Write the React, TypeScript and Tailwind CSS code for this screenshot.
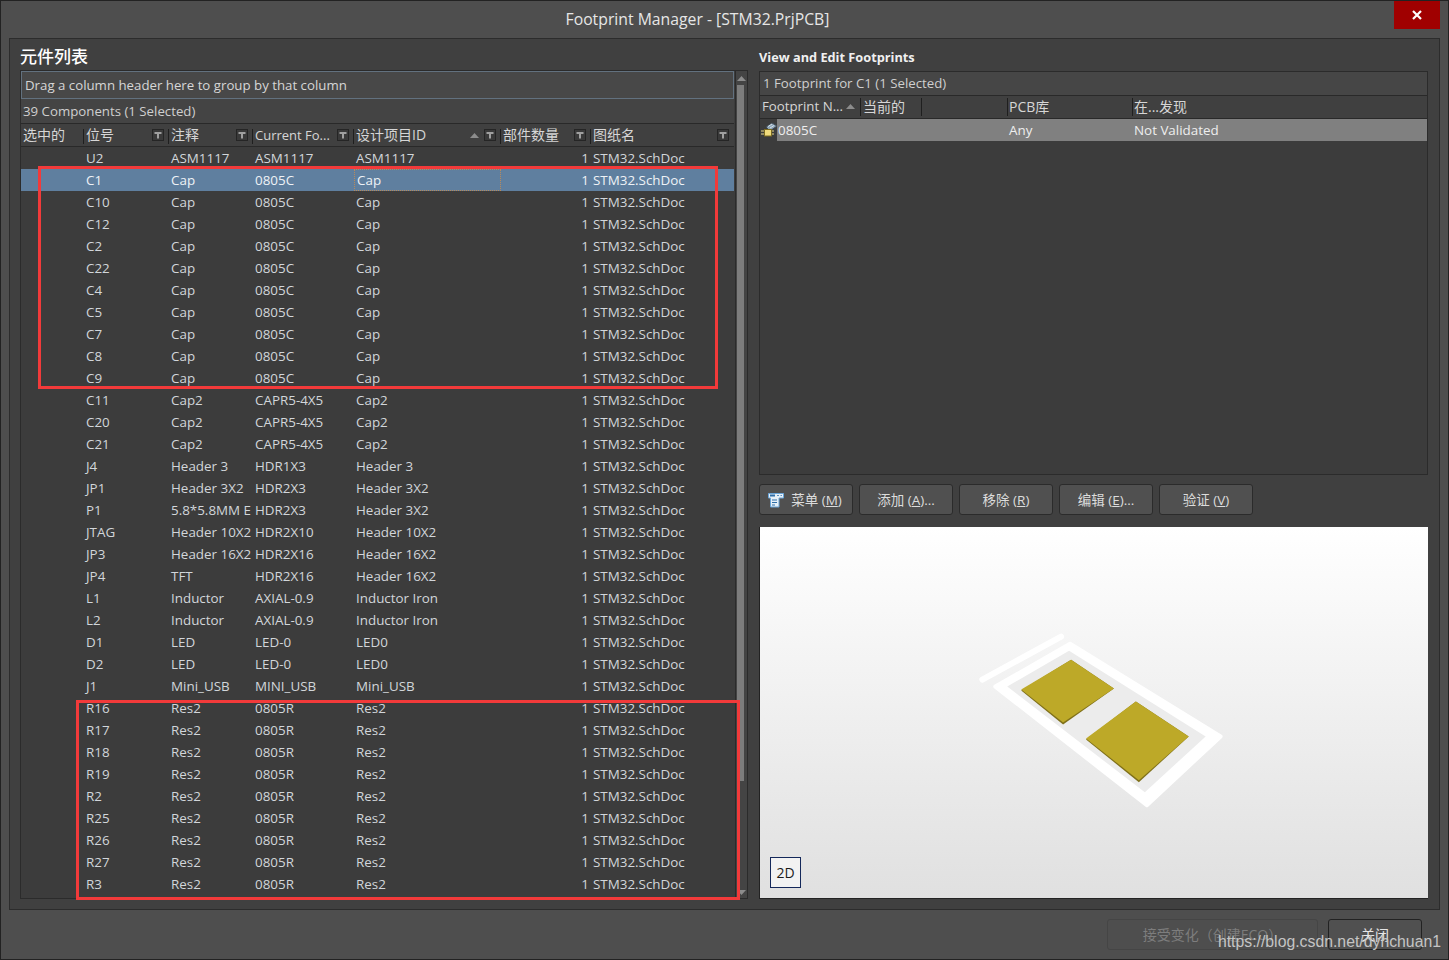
const font = { fontFamily: '"Open Sans", "Noto Sans CJK SC", sans-serif' };

const groups: [string, string, string, string[]][] = [
  ['ASM1117', 'ASM1117', 'ASM1117', ['U2']],
  ['Cap', '0805C', 'Cap', ['C1', 'C10', 'C12', 'C2', 'C22', 'C4', 'C5', 'C7', 'C8', 'C9']],
  ['Cap2', 'CAPR5-4X5', 'Cap2', ['C11', 'C20', 'C21']],
  ['Header 3', 'HDR1X3', 'Header 3', ['J4']],
  ['Header 3X2', 'HDR2X3', 'Header 3X2', ['JP1']],
  ['5.8*5.8MM E', 'HDR2X3', 'Header 3X2', ['P1']],
  ['Header 10X2', 'HDR2X10', 'Header 10X2', ['JTAG']],
  ['Header 16X2', 'HDR2X16', 'Header 16X2', ['JP3']],
  ['TFT', 'HDR2X16', 'Header 16X2', ['JP4']],
  ['Inductor', 'AXIAL-0.9', 'Inductor Iron', ['L1', 'L2']],
  ['LED', 'LED-0', 'LED0', ['D1', 'D2']],
  ['Mini_USB', 'MINI_USB', 'Mini_USB', ['J1']],
  ['Res2', '0805R', 'Res2', ['R16', 'R17', 'R18', 'R19', 'R2', 'R25', 'R26', 'R27', 'R3']],
];

const rows = groups.flatMap(([comment, footprint, id, names]) =>
  names.map((name) => ({ name, comment, footprint, id }))
);

const COLS = 'grid grid-cols-[63px_85px_84px_101px_147px_90px_143px]';

function FilterIcon() {
  return (
    <span className="absolute right-[5px] top-[5px] flex h-[12px] w-[12px] items-center justify-center border border-[#252525] bg-[#3a3a3a]">
      <svg width="8" height="8" viewBox="0 0 8 8">
        <path d="M0.5 1h7v2H5v4.5H3V3H0.5z" fill="#a0a0a0" />
      </svg>
    </span>
  );
}

function SortUp({ className }: { className: string }) {
  return (
    <svg className={className} width="9" height="5" viewBox="0 0 9 5">
      <path d="M4.5 0L9 5H0z" fill="#8c8c8c" />
    </svg>
  );
}

function HeaderCell({ label, filter = true, last = false, small = false, children }: { label: string; filter?: boolean; last?: boolean; small?: boolean; children?: React.ReactNode }) {
  return (
    <div className={`relative flex h-full items-center overflow-hidden whitespace-nowrap pl-[2px] ${small ? 'pt-[1px] text-[13px]' : 'pb-[1px] text-[14px]'}`}>
      {!last && <span className="absolute right-0 top-[5px] h-[15px] w-px bg-[#1f1f1f]" />}
      {label}
      {children}
      {filter && <FilterIcon />}
    </div>
  );
}

function ComponentRow({ row, index }: { row: (typeof rows)[number]; index: number }) {
  const selected = index === 1;
  return (
    <div className={`${COLS} h-[22px] items-center text-[13.4px] leading-[22px] ${selected ? 'bg-[#5f7f9f] text-[#eef2f6]' : 'text-[#d2d6da]'}`}>
      <div />
      <div className="pl-[2px]">{row.name}</div>
      <div className="overflow-hidden whitespace-nowrap pl-[2px]">{row.comment}</div>
      <div className="overflow-hidden whitespace-nowrap pl-[2px]">{row.footprint}</div>
      <div className={`h-[22px] pl-[2px] ${selected ? 'border border-dotted border-[#b98a5a] pl-[1px] leading-[20px]' : ''}`}>{row.id}</div>
      <div className="pr-[2px] text-right">1</div>
      <div className="pl-[2px]">STM32.SchDoc</div>
    </div>
  );
}

function ActionButton({ children }: { children: React.ReactNode }) {
  return (
    <button className="flex h-[31px] w-[94px] items-center justify-center rounded-[3px] border border-[#2b2b2b] bg-[#505050] pt-[1px] text-[13.5px] text-[#dcdcdc]">
      {children}
    </button>
  );
}

function MenuIcon() {
  return (
    <svg className="mr-[5px] -translate-x-[2px]" width="16" height="16" viewBox="0 0 16 16">
      <path d="M0.5 1.5h15v4.5H11v9H2.5V6H0.5z" fill="#e6f0f8" stroke="#6aa5d8" />
      <path d="M2 3.5h5" stroke="#2f6ea8" strokeWidth="2" />
      <path d="M9 3.5h2M12.5 3.5h1.5" stroke="#5d8fbd" />
      <path d="M4 8h5M4 10.5h5M4 13h3" stroke="#2f6ea8" />
    </svg>
  );
}

function FootprintIcon() {
  return (
    <svg className="absolute left-[1px] top-[3px]" width="17" height="16" viewBox="0 0 17 16">
      <path d="M5 5l6-4 5 3-7 5z" fill="#8fa6b8" stroke="#3f4a55" />
      <path d="M7 4.5l4-2.5M9 6l4-2.5" stroke="#d5e0ea" />
      <rect x="3.5" y="7.5" width="7" height="6.5" fill="#f1dc7c" stroke="#7a6a20" />
      <path d="M0 9h3M0 12h3M11 9h2M11 12h2" stroke="#e8d98a" />
    </svg>
  );
}

export default function App() {
  return (
    <div className="flex h-[960px] w-[1449px] flex-col overflow-hidden border border-[#222222] bg-[#4e4e4e] text-[13px] text-[#d2d6da]" style={font}>
      {/* Title bar */}
      <div className="relative flex h-[37px] shrink-0 items-center justify-center pr-[54px] text-[15.75px] text-[#e6e6e6]">
        Footprint Manager - [STM32.PrjPCB]
        <div className="absolute right-[8px] top-0 flex h-[28px] w-[46px] items-center justify-center bg-[#a00000]">
          <svg width="12" height="12" viewBox="0 0 12 12">
            <path d="M2 2l8 8M10 2l-8 8" stroke="#ffffff" strokeWidth="2.2" />
          </svg>
        </div>
      </div>

      {/* Main panel */}
      <div className="mx-[8px] flex h-[872px] shrink-0 gap-[11px] border border-[#2c2c2c] bg-[#404040] pl-[10px] pr-[11px]">
        {/* Left: component list */}
        <div className="relative w-[728px] shrink-0">
          <div className="h-[31px] pt-[6px] text-[17px] font-medium leading-[23px] text-white">元件列表</div>
          <div className="flex h-[829px] border border-[#2b2b2b] bg-[#3c3c3c]">
            <div className="w-[713px] shrink-0">
              <div className="flex h-[28px] items-center border border-[#62717f] bg-[#484848] pl-[3px] pt-[1px] text-[13.25px] text-[#d6d6d6]">
                Drag a column header here to group by that column
              </div>
              <div className="flex h-[24px] items-center bg-[#444444] pl-[2px] pt-[1px] text-[13.25px] text-[#cfcfcf]">39 Components (1 Selected)</div>
              <div className={`${COLS} h-[24px] border-y border-[#292929] bg-[#404040] text-[#d6d6d6]`}>
                <HeaderCell label="选中的" filter={false} />
                <HeaderCell label="位号" />
                <HeaderCell label="注释" />
                <HeaderCell label="Current Fo..." small />
                <HeaderCell label="设计项目ID">
                  <SortUp className="absolute right-[22px] top-[9px]" />
                </HeaderCell>
                <HeaderCell label="部件数量" />
                <HeaderCell label="图纸名" last />
              </div>
              {rows.map((row, index) => (
                <ComponentRow key={row.name} row={row} index={index} />
              ))}
            </div>
            {/* Scrollbar */}
            <div className="relative ml-[1px] w-[12px] shrink-0 border-l border-[#2b2b2b] bg-[#444444]">
              <SortUp className="absolute left-[1px] top-[5px]" />
              <div className="absolute left-[1px] top-[14px] h-[696px] w-[7px] bg-[#7d7d7d]" />
              <svg className="absolute bottom-[3px] left-[1px]" width="9" height="5" viewBox="0 0 9 5">
                <path d="M4.5 5L9 0H0z" fill="#8c8c8c" />
              </svg>
            </div>
          </div>
          {/* Annotation frames */}
          <div className="absolute left-[18px] top-[127px] h-[223px] w-[680px] border-[3px] border-[#f23a3a]" />
          <div className="absolute left-[56px] top-[661px] h-[200px] w-[664px] border-[3px] border-[#f23a3a]" />
        </div>

        {/* Right: footprints */}
        <div className="flex min-w-0 flex-1 flex-col">
          <div className="h-[32px] pt-[10px] text-[12.75px] font-bold leading-[17px] text-[#f0f0f0]">View and Edit Footprints</div>
          <div className="h-[404px] border border-[#2b2b2b] bg-[#3c3c3c]">
            <div className="flex h-[23px] items-center bg-[#464646] pl-[3px] text-[13.25px] text-[#cfcfcf]">1 Footprint for C1 (1 Selected)</div>
            <div className="grid h-[24px] grid-cols-[100px_61px_86px_125px_1fr] items-center border-y border-[#292929] bg-[#404040] text-[14px] text-[#d6d6d6]">
              <div className="relative whitespace-nowrap pl-[2px] text-[13.25px]">
                Footprint N...
                <SortUp className="absolute right-[5px] top-[7px]" />
              </div>
              <div className="h-[18px] border-l border-[#1f1f1f] pl-[2px] leading-[18px]">当前的</div>
              <div className="h-[18px] border-l border-[#1f1f1f]" />
              <div className="h-[18px] border-l border-[#1f1f1f] pl-[1px] leading-[18px]">PCB库</div>
              <div className="h-[18px] border-l border-[#1f1f1f] pl-[1px] leading-[18px]">在...发现</div>
            </div>
            <div className="relative h-[22px] pl-[17px]">
              <FootprintIcon />
              <div className="grid h-[22px] grid-cols-[231px_125px_1fr] items-center bg-[#808080] pl-[1px] pt-[1px] text-[13.4px] text-[#eeeeee]">
                <div>0805C</div>
                <div>Any</div>
                <div>Not Validated</div>
              </div>
            </div>
          </div>

          <div className="mt-[9px] flex gap-[6px]">
            <ActionButton>
              <MenuIcon />
              菜单 (<u>M</u>)
            </ActionButton>
            <ActionButton>添加 (<u>A</u>)...</ActionButton>
            <ActionButton>移除 (<u>R</u>)</ActionButton>
            <ActionButton>编辑 (<u>E</u>)...</ActionButton>
            <ActionButton>验证 (<u>V</u>)</ActionButton>
          </div>

          {/* 3D preview */}
          <div className="relative mt-[12px] h-[372px] border-b border-l border-[#222222] bg-gradient-to-b from-white to-[#e0e0e0]">
            <svg className="h-full w-full" viewBox="759 527 670 372">
              <path d="M1061 637L982 680" stroke="#ffffff" strokeWidth="6" strokeLinecap="round" />
              <path d="M1070 644l151 93-74 69-152-119z" fill="#ffffff" stroke="#ffffff" strokeWidth="4" strokeLinejoin="round" />
              <path d="M1069 651l137 86-61 56-138-106z" fill="#ececec" />
              <path d="M1071 660l43 29-51 36-42-34z" fill="#7f7019" />
              <path d="M1071 660l43 29-51 34-42-33z" fill="#bda928" />
              <path d="M1136 702l53 35-50 46-53-43z" fill="#7f7019" />
              <path d="M1136 702l53 35-50 44-53-42z" fill="#bda928" />
            </svg>
            <div className="absolute bottom-[10px] left-[10px] flex h-[31px] w-[31px] items-center justify-center border border-[#14285a] bg-[#f2f2f2] text-[14px] text-[#1a1a1a]">
              2D
            </div>
          </div>
        </div>
      </div>

      {/* Footer */}
      <div className="relative flex flex-1 justify-end gap-[10px] pr-[26px] pt-[9px]">
        <button className="h-[31px] w-[211px] rounded-[3px] border border-[#454545] bg-[#4e4e4e] text-[14px] text-[#7d7d7d]">接受变化（创建ECO）</button>
        <button className="h-[31px] w-[94px] rounded-[3px] border border-[#222222] bg-[#505050] text-[14px] text-[#e6e6e6]">关闭</button>
        <span className="absolute right-[7px] top-[22px] text-[15.8px] leading-[20px] text-[#c4c4c4]" style={{ fontFamily: '"Liberation Sans", sans-serif' }}>
          https://blog.csdn.net/dyhchuan1
        </span>
      </div>
    </div>
  );
}
